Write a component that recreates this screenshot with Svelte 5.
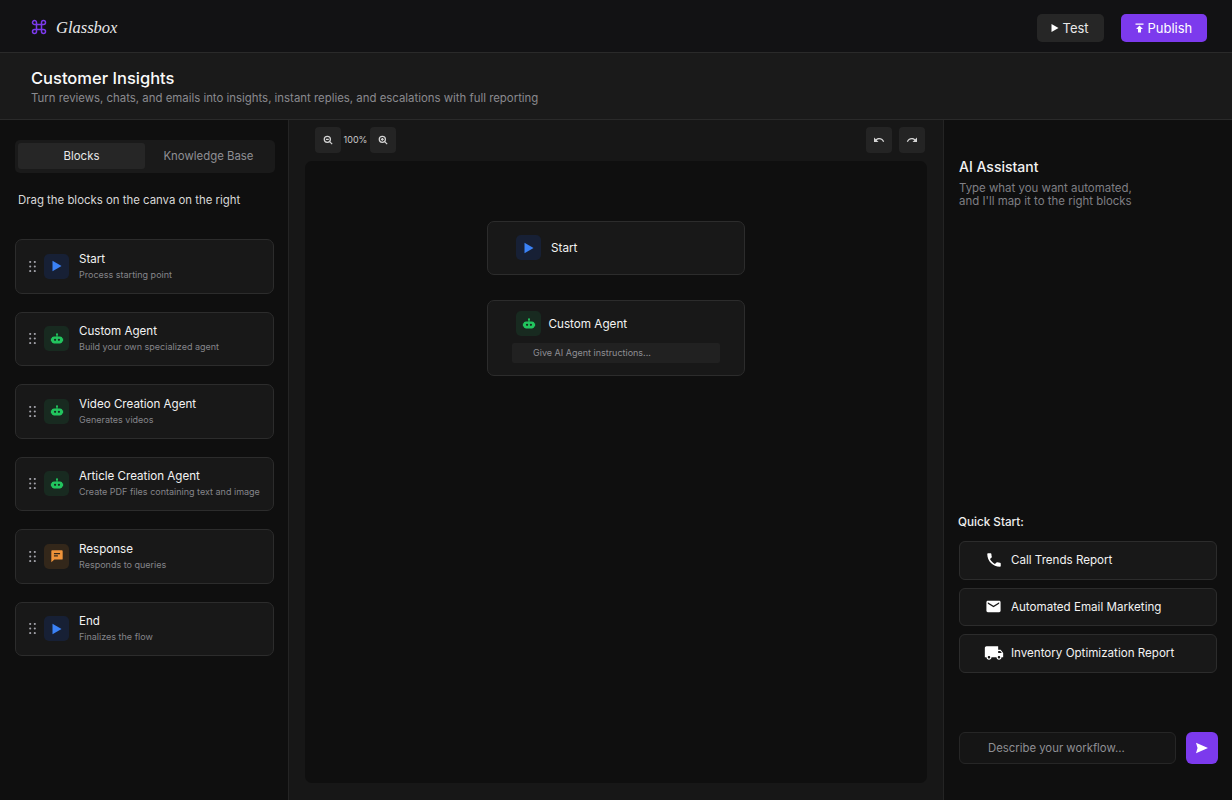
<script>
  const blocks = [
    { name: 'Start', desc: 'Process starting point', kind: 'play' },
    { name: 'Custom Agent', desc: 'Build your own specialized agent', kind: 'bot' },
    { name: 'Video Creation Agent', desc: 'Generates videos', kind: 'bot' },
    { name: 'Article Creation Agent', desc: 'Create PDF files containing text and image', kind: 'bot' },
    { name: 'Response', desc: 'Responds to queries', kind: 'chat' },
    { name: 'End', desc: 'Finalizes the flow', kind: 'play' }
  ];
</script>

{#snippet icon(kind)}
  <span class="ico {kind}">
    {#if kind === 'play'}
      <svg width="16" height="16" viewBox="0 0 16 16"><path d="M3.5 2.700 12.500 8l-9 5.300z" fill="#3b82f6"/></svg>
    {:else if kind === 'bot'}
      <svg width="14" height="14" viewBox="0 0 16 16"><circle cx="8" cy="2.600" r="1.200" fill="#22c55e"/><rect x="7.300" y="3" width="1.400" height="2.500" fill="#22c55e"/><path fill-rule="evenodd" d="M4.500 5h7A3 3 0 0 1 14.400 7.500H15v3h-.6A3 3 0 0 1 11.500 13h-7a3 3 0 0 1-2.900-2.500H1v-3h.6A3 3 0 0 1 4.500 5zM5.800 7.600a1.300 1.300 0 1 0 0 2.600 1.300 1.300 0 0 0 0-2.600zm4.400 0a1.300 1.300 0 1 0 0 2.600 1.300 1.300 0 0 0 0-2.600z" fill="#22c55e"/></svg>
    {:else}
      <svg width="14" height="14" viewBox="0 0 16 16"><path fill-rule="evenodd" d="M2.500 1.500h11a1 1 0 0 1 1 1v8.500a1 1 0 0 1-1 1H5l-3.500 3V2.500a1 1 0 0 1 1-1zM4.500 4.500v1.400h7V4.500zm0 2.600v1.400h4.500V7.100z" fill="#f0943a"/></svg>
    {/if}
  </span>
{/snippet}

<div class="app">
  <header class="top">
    <div class="brand">
      <svg class="cmd" width="16" height="16" viewBox="0 0 16 16" fill="none" stroke="#7c3aed" stroke-width="1.500"><path d="M5.500 5.500h5v5h-5zM5.500 5.500H3.700a2 2 0 1 1 1.800-2zM10.500 5.500V3.500a2 2 0 1 1 2 2zM10.500 10.500h2a2 2 0 1 1-2 2zM5.500 10.500v2a2 2 0 1 1-2-2z"/></svg>
      <span class="logo">Glassbox</span>
    </div>
    <div class="actions">
      <button class="btn test">
        <svg width="8" height="10" viewBox="0 0 8 10"><path d="M0.500 1 7.500 5l-7 4z" fill="#fff"/></svg>
        Test
      </button>
      <button class="btn publish">
        <svg width="9" height="10" viewBox="0 0 9 10"><path d="M0.500 0.500h8v1.300h-8zM4.500 2.500 8 6H6v3.500H3V6H1z" fill="#fff"/></svg>
        Publish
      </button>
    </div>
  </header>

  <section class="sub">
    <h1>Customer Insights</h1>
    <p>Turn reviews, chats, and emails into insights, instant replies, and escalations with full reporting</p>
  </section>

  <div class="main">
    <aside class="left">
      <div class="tabs">
        <div class="tab active">Blocks</div>
        <div class="tab">Knowledge Base</div>
      </div>
      <div class="hint">Drag the blocks on the canva on the right</div>
      <div class="list">
        {#each blocks as b}
          <div class="card">
            <svg class="grip" width="7" height="11" viewBox="0 0 7 11" fill="#a3a3aa">
              {#each [1, 5.500, 10] as y}
                <circle cx="1.200" cy={y} r="1.050"/><circle cx="5.800" cy={y} r="1.050"/>
              {/each}
            </svg>
            {@render icon(b.kind)}
            <div class="txt">
              <div class="name">{b.name}</div>
              <div class="desc">{b.desc}</div>
            </div>
          </div>
        {/each}
      </div>
    </aside>

    <main class="center">
      <div class="toolbar">
        <div class="group">
          <button class="tool" aria-label="Zoom out">
            <svg width="10" height="10" viewBox="0 0 12 12" fill="none" stroke="#d4d4d4" stroke-width="1.500"><circle cx="5.200" cy="5.200" r="3.700"/><path d="M8 8l3 3M3.500 5.200h3.400"/></svg>
          </button>
          <span class="pct">100%</span>
          <button class="tool" aria-label="Zoom in">
            <svg width="10" height="10" viewBox="0 0 12 12" fill="none" stroke="#d4d4d4" stroke-width="1.500"><circle cx="5.200" cy="5.200" r="3.700"/><path d="M8 8l3 3M3.500 5.200h3.400M5.200 3.500v3.400"/></svg>
          </button>
        </div>
        <div class="group gap">
          <button class="tool" aria-label="Undo">
            <svg width="12" height="12" viewBox="0 0 24 24" fill="#d4d4d4"><path d="M12.500 8c-2.650 0-5.050.99-6.900 2.600L2 7v9h9l-3.620-3.620c1.390-1.160 3.160-1.880 5.120-1.880 3.540 0 6.550 2.310 7.600 5.500l2.370-.78C21.080 11.030 17.150 8 12.500 8z"/></svg>
          </button>
          <button class="tool" aria-label="Redo">
            <svg width="12" height="12" viewBox="0 0 24 24" fill="#d4d4d4"><path d="M18.400 10.600C16.550 8.990 14.150 8 11.500 8c-4.650 0-8.580 3.030-9.960 7.220L3.900 16c1.050-3.190 4.050-5.500 7.600-5.500 1.950 0 3.730.72 5.120 1.880L13 16h9V7l-3.600 3.600z"/></svg>
          </button>
        </div>
      </div>
      <div class="canvas">
        <div class="node start">
          {@render icon('play')}
          <span class="nname">Start</span>
        </div>
        <div class="node agent">
          <div class="nrow">
            {@render icon('bot')}
            <span class="nname">Custom Agent</span>
          </div>
          <div class="prompt">Give AI Agent instructions...</div>
        </div>
      </div>
    </main>

    <aside class="right">
      <h2>AI Assistant</h2>
      <p class="lead">Type what you want automated,<br />and I'll map it to the right blocks</p>
      <div class="quick">
        <div class="qtitle">Quick Start:</div>
        <button class="qbtn">
          <span class="qi"><svg width="18" height="18" viewBox="0 0 24 24" fill="#fff"><path d="M6.620 10.790c1.440 2.830 3.760 5.140 6.590 6.590l2.200-2.200c.27-.27.67-.36 1.020-.24 1.120.37 2.330.57 3.570.57.550 0 1 .45 1 1V20c0 .55-.45 1-1 1-9.390 0-17-7.610-17-17 0-.55.45-1 1-1h3.500c.55 0 1 .45 1 1 0 1.250.2 2.450.57 3.570.11.350.03.740-.25 1.020l-2.200 2.200z"/></svg></span>
          Call Trends Report
        </button>
        <button class="qbtn">
          <span class="qi"><svg width="17" height="17" viewBox="0 0 24 24" fill="#fff"><path d="M20 4H4c-1.100 0-1.990.9-1.990 2L2 18c0 1.100.9 2 2 2h16c1.100 0 2-.9 2-2V6c0-1.100-.9-2-2-2zm0 4-8 5-8-5V6l8 5 8-5v2z"/></svg></span>
          Automated Email Marketing
        </button>
        <button class="qbtn">
          <span class="qi"><svg width="20" height="20" viewBox="0 0 24 24" fill="#fff"><path d="M20 8h-3V4H3c-1.100 0-2 .9-2 2v11h2c0 1.660 1.340 3 3 3s3-1.340 3-3h6c0 1.660 1.340 3 3 3s3-1.340 3-3h2v-5l-3-4zM6 18.500c-.83 0-1.500-.67-1.500-1.500s.67-1.500 1.500-1.500 1.500.67 1.500 1.500-.67 1.500-1.500 1.500zm13.500-9 1.960 2.500H17V9.500h2.500zm-1.500 9c-.83 0-1.500-.67-1.500-1.500s.67-1.500 1.500-1.500 1.500.67 1.500 1.500-.67 1.500-1.500 1.500z"/></svg></span>
          Inventory Optimization Report
        </button>
      </div>
      <div class="composer">
        <div class="input">Describe your workflow...</div>
        <button class="send" aria-label="Send">
          <svg width="14" height="12" viewBox="0 0 16 14"><path d="M1 1l14 6-14 6 1.800-6z" fill="#fff"/></svg>
        </button>
      </div>
    </aside>
  </div>
</div>

<style>
  :global(body) { margin: 0; background: #0f0f0f; }
  * { box-sizing: border-box; }
  button { font-family: inherit; border: none; cursor: pointer; }
  .app { width: 1232px; height: 800px; overflow: hidden; display: flex; flex-direction: column; font-family: Inter, "Liberation Sans", sans-serif; color: #fff; background: #0f0f0f; }
  .top { height: 53px; flex: none; display: flex; align-items: center; justify-content: space-between; padding: 3px 25px 0 31px; background: #121214; border-bottom: 1px solid #2a2a2a; }
  .brand { display: flex; align-items: center; gap: 9px; }
  .cmd { display: block; margin-top: -2px; }
  .logo { font-family: "Liberation Serif", serif; font-style: italic; font-size: 16.500px; color: #e8e8e8; line-height: 24px; }
  .actions { display: flex; gap: 17px; align-items: center; }
  .btn { height: 28px; border-radius: 5px; display: flex; align-items: center; gap: 4px; font-size: 13px; color: #fff; font-weight: 400; }
  .test { width: 67px; background: #262626; padding: 0 0 0 13.500px; color: #e8e8e8; }
  .publish { width: 86px; background: #7c3aed; padding: 0 0 0 13.500px; }
  .sub { height: 67px; flex: none; padding: 15px 31px 0; background: #1a1a1a; border-bottom: 1px solid #2a2a2a; }
  h1 { margin: 0; font-size: 16.500px; font-weight: 500; line-height: 21px; color: #fafafa; }
  .sub p { margin: 1px 0 0; font-size: 11.400px; line-height: 16px; color: #8a8a8f; }
  .main { flex: 1; display: flex; min-height: 0; }
  .left { width: 289px; flex: none; background: #0f0f0f; border-right: 1px solid #242424; padding: 20px 15px 0; }
  .tabs { width: 260px; height: 33px; background: #1a1a1a; border-radius: 5px; padding: 3px; display: flex; }
  .tab { width: 127px; height: 26px; display: flex; align-items: center; justify-content: center; font-size: 11.400px; color: #8f8f94; border-radius: 3px; }
  .tab.active { background: #262626; color: #e8e8e8; }
  .hint { margin: 19px 0 0 3px; font-size: 11.400px; line-height: 17px; color: #d8d8d8; }
  .list { margin-top: 30px; display: flex; flex-direction: column; gap: 18px; }
  .card { width: 259px; height: 54.500px; display: flex; align-items: center; background: #181818; border: 1px solid #2c2c2c; border-radius: 7px; padding-left: 13px; }
  .grip { flex: none; margin-right: 8px; }
  .ico { width: 25px; height: 25px; border-radius: 5px; flex: none; display: flex; align-items: center; justify-content: center; }
  .ico.play { background: #172035; }
  .ico.bot { background: #182a20; }
  .ico.chat { background: #33271a; }
  .txt { margin: -1px 0 0 10px; }
  .name { font-size: 11.600px; line-height: 16px; color: #f2f2f2; }
  .desc { margin-top: 1px; font-size: 9px; line-height: 13px; color: #85858a; white-space: nowrap; }
  .center { width: 655px; flex: none; background: #171717; border-right: 1px solid #242424; padding: 7px 16px 0; display: flex; flex-direction: column; }
  .toolbar { height: 34px; display: flex; justify-content: space-between; padding: 0 2px 0 10px; }
  .group { display: flex; align-items: flex-start; }
  .group.gap { gap: 7px; }
  .tool { width: 26px; height: 26px; background: #242424; border-radius: 4px; display: flex; align-items: center; justify-content: center; padding: 0; }
  .pct { width: 29px; text-align: center; font-size: 9px; line-height: 26px; color: #c8c8c8; }
  .canvas { width: 622px; height: 622px; background: #0f0f0f; border-radius: 7px; display: flex; flex-direction: column; align-items: center; padding-top: 60px; gap: 25px; }
  .node { width: 258px; background: #181818; border: 1px solid #2c2c2c; border-radius: 7px; }
  .node.start { height: 54px; display: flex; align-items: center; padding: 0 0 1px 28px; gap: 10px; }
  .node.agent { height: 76px; padding: 10px 24px 0 23.500px; }
  .nrow { display: flex; align-items: center; gap: 7.500px; padding-left: 4.500px; }
  .nname { font-size: 11.700px; color: #f2f2f2; }
  .prompt { margin-top: 7px; height: 20px; width: 208.500px; background: #212121; border-radius: 2px; padding-left: 21.500px; font-size: 9px; line-height: 20px; color: #8f8f94; }
  .right { flex: 1; background: #0f0f0f; padding: 38px 15px 0; display: flex; flex-direction: column; }
  h2 { margin: 0; font-size: 14px; font-weight: 500; line-height: 18px; color: #f2f2f2; }
  .lead { margin: 6px 0 0; font-size: 11.450px; line-height: 13px; color: #7f7f84; }
  .quick { margin-top: 307px; }
  .qtitle { font-size: 11.700px; font-weight: 500; line-height: 14px; color: #f0f0f0; margin: 0 0 12px -1px; }
  .qbtn { width: 258px; height: 38.500px; margin-bottom: 8px; display: flex; align-items: center; background: #181818; border: 1px solid #2c2c2c; border-radius: 6px; padding: 0; font-size: 11.600px; color: #f2f2f2; }
  .qi { width: 51px; flex: none; display: flex; justify-content: center; padding-left: 16px; box-sizing: border-box; }
  .composer { margin-top: 51px; display: flex; gap: 9.500px; align-items: center; }
  .input { width: 217px; height: 32px; background: #151515; border: 1px solid #262626; border-radius: 6px; padding-left: 28px; font-size: 11.350px; line-height: 30px; color: #8f8f94; }
  .send { width: 32px; height: 32px; border-radius: 6px; background: #7c3aed; display: flex; align-items: center; justify-content: center; padding: 0; }
</style>
